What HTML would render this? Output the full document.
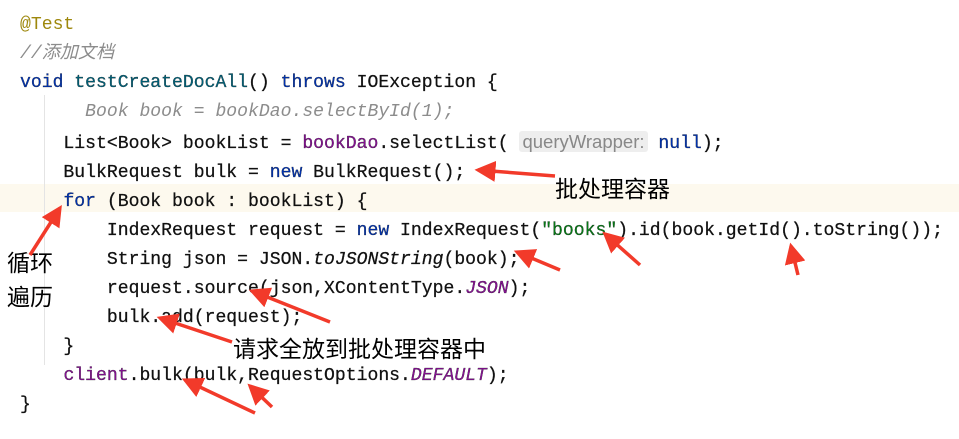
<!DOCTYPE html>
<html><head><meta charset="utf-8"><style>
html,body{margin:0;padding:0;background:#fff;width:959px;height:439px;overflow:hidden}
.code{position:absolute;left:20px;top:11px;font-family:"Liberation Mono","Noto Sans CJK SC",monospace;font-size:18.1px;line-height:29px;color:#111;white-space:pre;-webkit-text-stroke:0.25px #111}
.hl{position:absolute;left:0;top:184px;width:959px;height:28px;background:#fdf9ee}
.ann{position:absolute;font-family:"Liberation Sans","Noto Sans CJK SC",sans-serif;font-size:23px;color:#000}
.a{color:#9e880d;-webkit-text-stroke:0}.c{color:#8c8c8c;font-style:italic;-webkit-text-stroke:0}.k{color:#0033b3}.f{color:#00627a}.p{color:#871094}.s{color:#067d17}.i{font-style:italic}
.hint{background:#eeeeee;color:#888;font-family:"Liberation Sans",sans-serif;font-size:18.5px;padding:0 3px;border-radius:3px;-webkit-text-stroke:0}
.guide{position:absolute;left:44px;top:95px;width:1px;height:270px;background:#e4e4e4}
</style></head><body>
<div class="hl"></div>
<div class="guide"></div>
<div class="code"><span class="a">@Test</span>
<span class="c">//添加文档</span>
<span class="k">void</span> <span class="f">testCreateDocAll</span>() <span class="k">throws</span> IOException {
      <span class="c">Book book = bookDao.selectById(1);</span>
    List&lt;Book&gt; bookList = <span class="p">bookDao</span>.selectList( <span class="hint">queryWrapper:</span> <span class="k">null</span>);
    BulkRequest bulk = <span class="k">new</span> BulkRequest();
    <span class="k">for</span> (Book book : bookList) {
        IndexRequest request = <span class="k">new</span> IndexRequest(<span class="s">"books"</span>).id(book.getId().toString());
        String json = JSON.<span class="i">toJSONString</span>(book);
        request.source(json,XContentType.<span class="p i">JSON</span>);
        bulk.add(request);
    }
    <span class="p">client</span>.bulk(bulk,RequestOptions.<span class="p i">DEFAULT</span>);
}</div>
<div class="ann" style="left:555px;top:170px">批处理容器</div>
<div class="ann" style="left:7px;top:246px;line-height:34px">循环<br>遍历</div>
<div class="ann" style="left:233px;top:330px">请求全放到批处理容器中</div>
<svg width="959" height="439" style="position:absolute;left:0;top:0">
<defs><marker id="h" markerWidth="6" markerHeight="6" refX="5" refY="3" orient="auto" markerUnits="strokeWidth"><path d="M0,0 L6,3 L0,6 z" fill="#f23a2a"/></marker></defs>
<g stroke="#f23a2a" stroke-width="3.5" marker-end="url(#h)">
<line x1="555" y1="176" x2="478" y2="170"/>
<line x1="30" y1="255" x2="60" y2="208"/>
<line x1="640" y1="265" x2="605" y2="234"/>
<line x1="798" y1="275" x2="791" y2="246"/>
<line x1="560" y1="270" x2="517" y2="252"/>
<line x1="330" y1="322" x2="252" y2="291"/>
<line x1="232" y1="342" x2="160" y2="318"/>
<line x1="255" y1="413" x2="185" y2="380"/>
<line x1="272" y1="407" x2="250" y2="386"/>
</g></svg>
</body></html>
